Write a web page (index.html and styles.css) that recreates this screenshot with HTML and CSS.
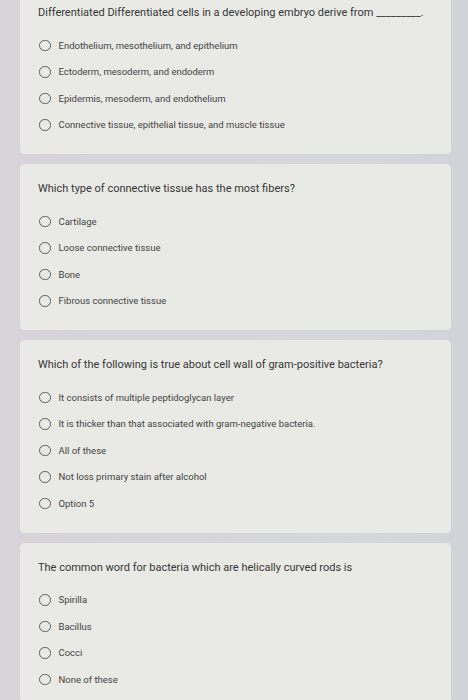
FILE: index.html
```html
<!DOCTYPE html>
<html>
<head>
<meta charset="utf-8">
<link rel="stylesheet" href="styles.css">
</head>
<body>
<div class="page">
  <div class="card">
    <div class="title">Differentiated Differentiated cells in a developing embryo derive from _________.</div>
    <div class="options">
      <div class="opt"><span class="radio"></span><span class="label">Endothelium, mesothelium, and epithelium</span></div>
      <div class="opt"><span class="radio"></span><span class="label">Ectoderm, mesoderm, and endoderm</span></div>
      <div class="opt"><span class="radio"></span><span class="label">Epidermis, mesoderm, and endothelium</span></div>
      <div class="opt"><span class="radio"></span><span class="label">Connective tissue, epithelial tissue, and muscle tissue</span></div>
    </div>
  </div>
  <div class="card">
    <div class="title">Which type of connective tissue has the most fibers?</div>
    <div class="options">
      <div class="opt"><span class="radio"></span><span class="label">Cartilage</span></div>
      <div class="opt"><span class="radio"></span><span class="label">Loose connective tissue</span></div>
      <div class="opt"><span class="radio"></span><span class="label">Bone</span></div>
      <div class="opt"><span class="radio"></span><span class="label">Fibrous connective tissue</span></div>
    </div>
  </div>
  <div class="card">
    <div class="title">Which of the following is true about cell wall of gram-positive bacteria?</div>
    <div class="options">
      <div class="opt"><span class="radio"></span><span class="label">It consists of multiple peptidoglycan layer</span></div>
      <div class="opt"><span class="radio"></span><span class="label">It is thicker than that associated with gram-negative bacteria.</span></div>
      <div class="opt"><span class="radio"></span><span class="label">All of these</span></div>
      <div class="opt"><span class="radio"></span><span class="label">Not loss primary stain after alcohol</span></div>
      <div class="opt"><span class="radio"></span><span class="label">Option 5</span></div>
    </div>
  </div>
  <div class="card">
    <div class="title">The common word for bacteria which are helically curved rods is</div>
    <div class="options">
      <div class="opt"><span class="radio"></span><span class="label">Spirilla</span></div>
      <div class="opt"><span class="radio"></span><span class="label">Bacillus</span></div>
      <div class="opt"><span class="radio"></span><span class="label">Cocci</span></div>
      <div class="opt"><span class="radio"></span><span class="label">None of these</span></div>
    </div>
  </div>
</div>
</body>
</html>
```

FILE: styles.css
```css
html, body {
  margin: 0;
  padding: 0;
  height: 700px;
  overflow: hidden;
}
body {
  background: linear-gradient(90deg, #d9d3d8 0%, #d5d5da 20%, #d6d7db 80%, #d2d3d8 100%);
  font-family: Roboto, "Noto Sans", "Liberation Sans", sans-serif;
}
.page {
  display: flex;
  flex-direction: column;
  gap: 10px;
  margin: -12px 17px 0 20px;
}
.card {
  background: #e9eae5;
  border-radius: 4px;
  padding: 18px 17px 16px 18px;
  box-shadow: 0 0 1px rgba(0,0,0,0.08);
}
.title {
  font-size: 11px;
  line-height: 14px;
  color: #363636;
  white-space: nowrap;
}
.options {
  display: flex;
  flex-direction: column;
  margin-top: 12px;
}
.opt {
  display: flex;
  align-items: center;
  height: 26.5px;
}
.radio {
  width: 9.5px;
  height: 9.5px;
  border: 1.6px solid #5c5c5c;
  border-radius: 50%;
  flex: none;
  margin-left: 1px;
}
.label {
  margin-left: 8px;
  font-size: 9.5px;
  color: #444;
  white-space: nowrap;
}
```
